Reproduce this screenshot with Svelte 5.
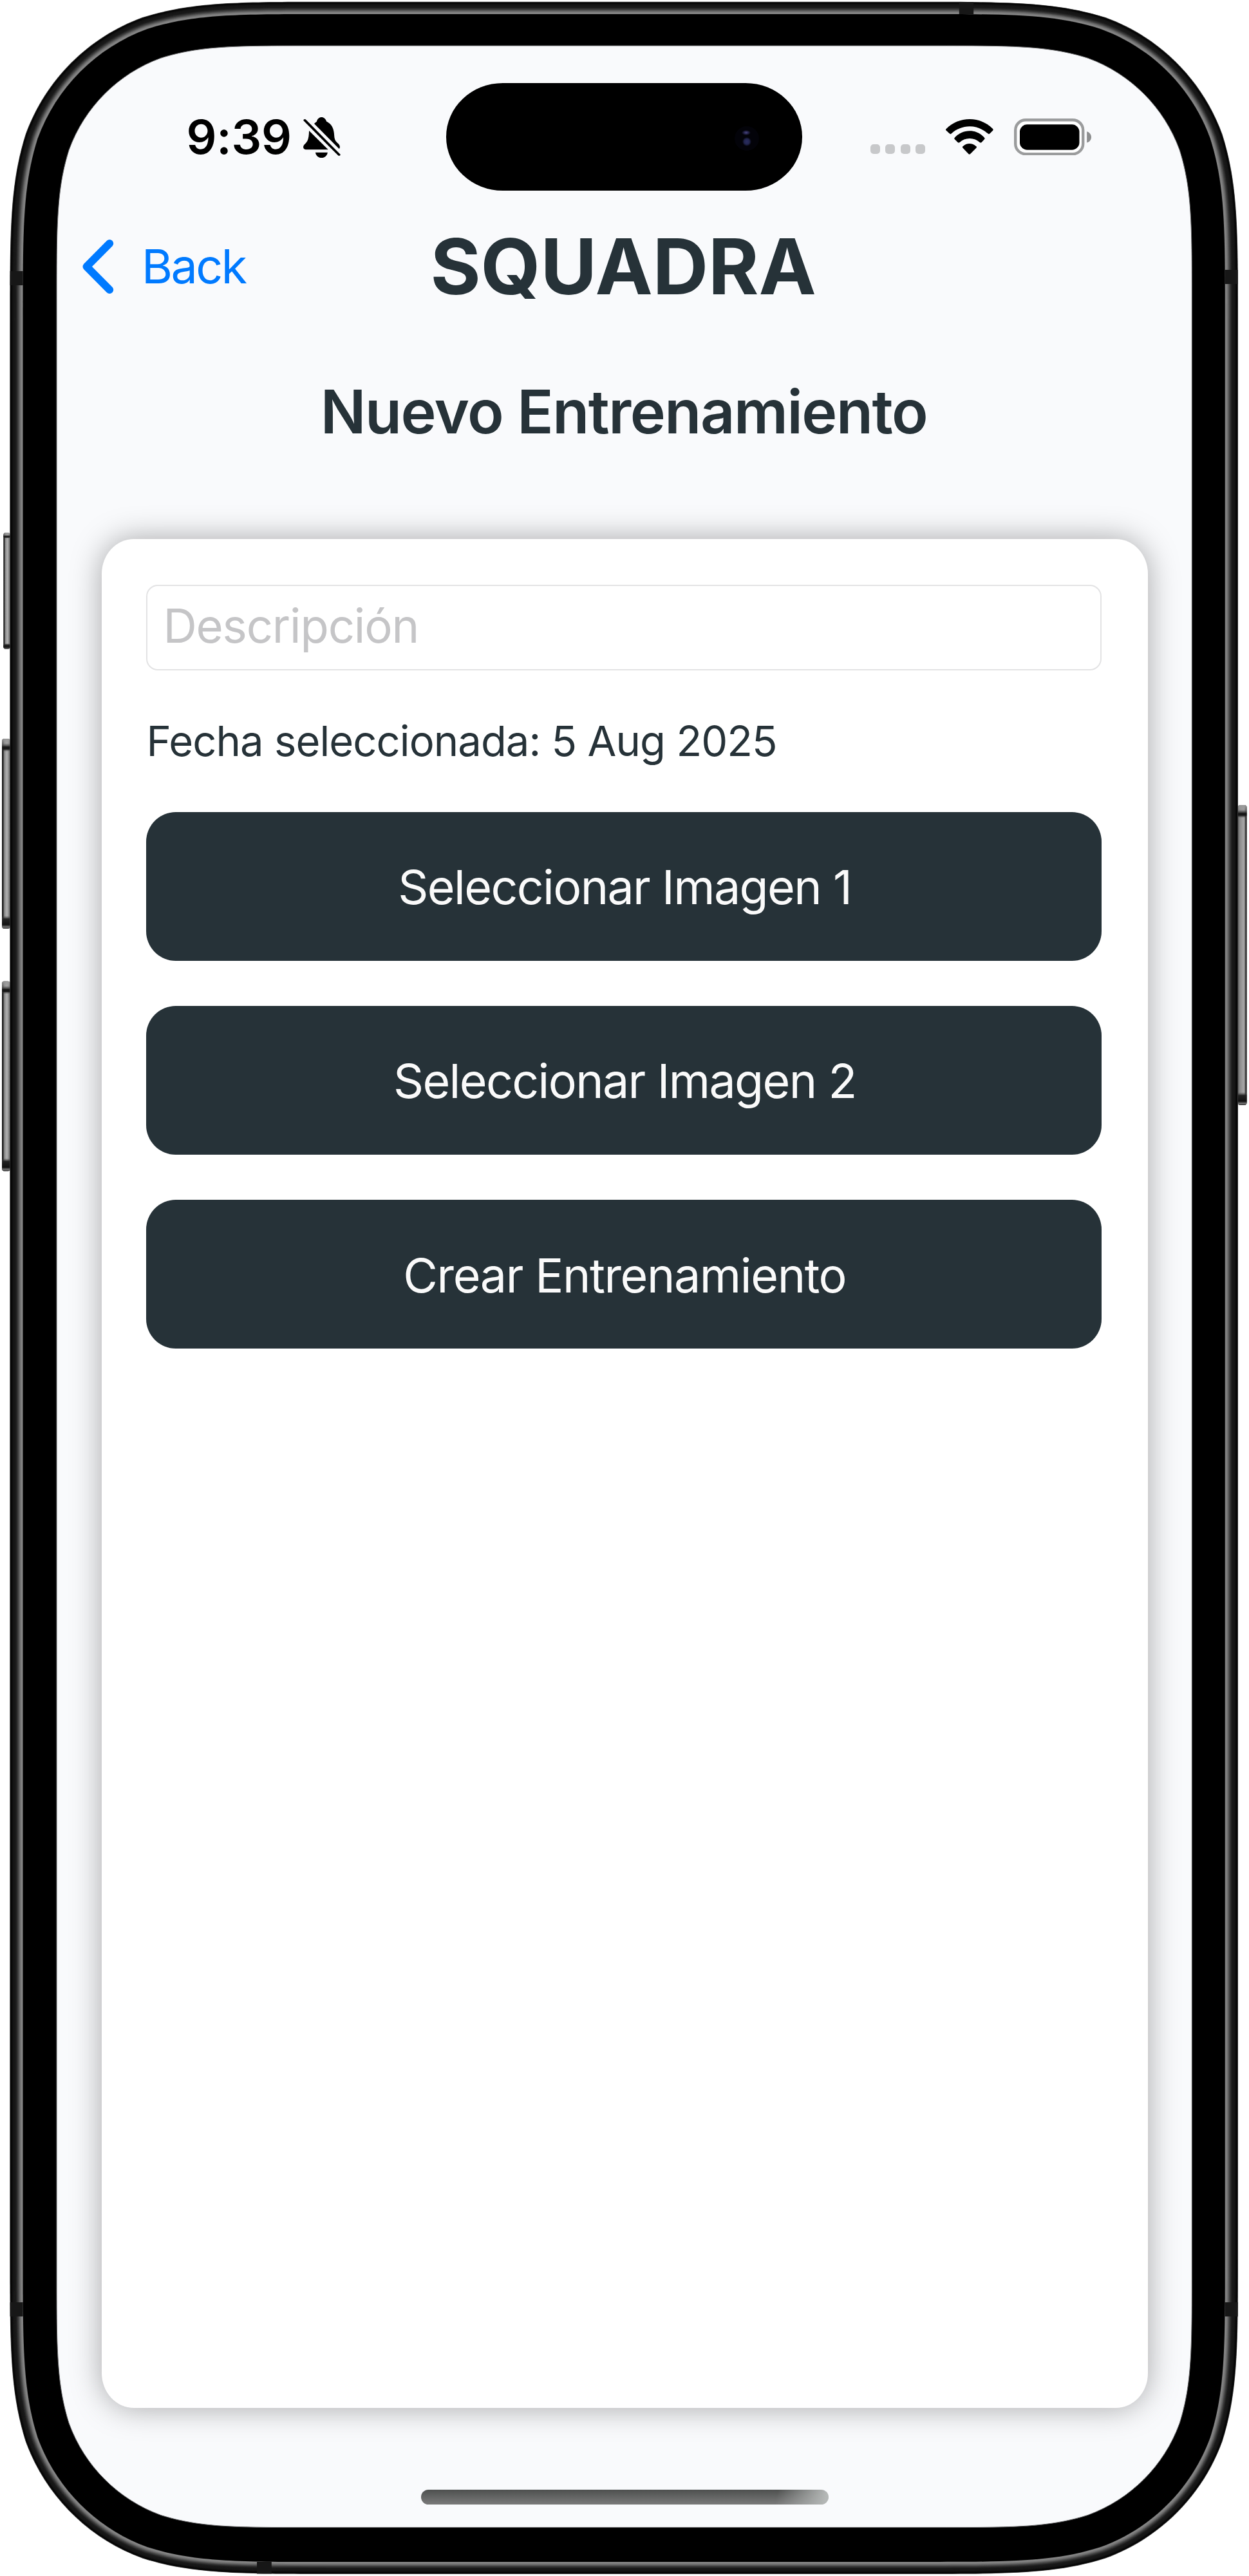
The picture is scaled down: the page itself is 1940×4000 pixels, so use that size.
<script>
  const actions = [
    { label: 'Seleccionar Imagen 1', tight: true },
    { label: 'Seleccionar Imagen 2', tight: true },
    { label: 'Crear Entrenamiento', tight: false }
  ];

  // Rounded rectangle with continuous-curvature corners.
  function squircle(x0, y0, x1, y1, r) {
    const a = 1.52866 * r, b = 1.08849 * r, c = 0.86841 * r;
    const d = 0.63149 * r, e = 0.07491 * r, f = 0.37282 * r, g = 0.16906 * r;
    return `M${x0 + a} ${y0}H${x1 - a}` +
      `C${x1 - b} ${y0} ${x1 - c} ${y0} ${x1 - d} ${y0 + e}` +
      `C${x1 - f} ${y0 + g} ${x1 - g} ${y0 + f} ${x1 - e} ${y0 + d}` +
      `C${x1} ${y0 + c} ${x1} ${y0 + b} ${x1} ${y0 + a}V${y1 - a}` +
      `C${x1} ${y1 - b} ${x1} ${y1 - c} ${x1 - e} ${y1 - d}` +
      `C${x1 - g} ${y1 - f} ${x1 - f} ${y1 - g} ${x1 - d} ${y1 - e}` +
      `C${x1 - c} ${y1} ${x1 - b} ${y1} ${x1 - a} ${y1}H${x0 + a}` +
      `C${x0 + b} ${y1} ${x0 + c} ${y1} ${x0 + d} ${y1 - e}` +
      `C${x0 + f} ${y1 - g} ${x0 + g} ${y1 - f} ${x0 + e} ${y1 - d}` +
      `C${x0} ${y1 - c} ${x0} ${y1 - b} ${x0} ${y1 - a}V${y0 + a}` +
      `C${x0} ${y0 + b} ${x0} ${y0 + c} ${x0 + e} ${y0 + d}` +
      `C${x0 + g} ${y0 + f} ${x0 + f} ${y0 + g} ${x0 + d} ${y0 + e}` +
      `C${x0 + c} ${y0} ${x0 + b} ${y0} ${x0 + a} ${y0}Z`;
  }

  // Brightness profile of the metal rim, from the outer edge to the inner one.
  const stops = [[0, 70], [0.05, 4], [0.14, 10], [0.22, 21], [0.45, 27], [0.6, 58], [0.78, 112], [0.92, 138], [1, 108]];
  function shade(t) {
    let i = 1;
    while (i < stops.length - 1 && stops[i][0] < t) i++;
    const [ta, va] = stops[i - 1];
    const [tb, vb] = stops[i];
    return Math.round(va + ((t - ta) / (tb - ta)) * (vb - va));
  }

  const steps = 40;
  const rim = Array.from({ length: steps }, (_, i) => {
    const t = i / steps;
    const v = shade(t);
    return {
      d: squircle(15.3 + 20.3 * t, 2.7 + 19.3 * t, 1923 - 20.3 * t, 3996.9 - 19 * t, 326 - 20 * t),
      fill: `rgb(${v},${v},${v})`
    };
  });
  const bezel = squircle(35.6, 22, 1902.7, 3978, 306);
  const glass = squircle(88, 71, 1851.3, 3924.6, 256);

  const sideKeys = [
    { x: 5.3, y: 827, w: 10.5, h: 181, tip: 9, side: 'left' },
    { x: 3, y: 1147, w: 13, h: 295, tip: 20, side: 'left' },
    { x: 3, y: 1523.5, w: 13, h: 295, tip: 20, side: 'left' },
    { x: 1922.6, y: 1250, w: 14, h: 466, tip: 20, side: 'right' }
  ];
  const bands = [
    { x: 15.6, y: 421, w: 20, h: 22 },
    { x: 1902.7, y: 419, w: 20, h: 22 },
    { x: 15.6, y: 3575, w: 20, h: 22 },
    { x: 1902.7, y: 3575, w: 20, h: 22 },
    { x: 1489.8, y: 3, w: 22.4, h: 19 },
    { x: 399, y: 3978, w: 22.8, h: 18.5 }
  ];
</script>

<div class="phone">
  <svg class="frame" viewBox="0 0 1940 4000" aria-hidden="true">
    <defs>
      <linearGradient id="key-left" x1="0" x2="1">
        <stop offset="0" stop-color="#111" /><stop offset="0.14" stop-color="#2a2a2a" />
        <stop offset="0.3" stop-color="#8c8c8c" /><stop offset="0.6" stop-color="#b0b0b0" />
        <stop offset="0.85" stop-color="#808080" /><stop offset="1" stop-color="#555" />
      </linearGradient>
      <linearGradient id="key-right" x1="0" x2="1">
        <stop offset="0" stop-color="#555" /><stop offset="0.2" stop-color="#888" />
        <stop offset="0.65" stop-color="#a8a8a8" /><stop offset="0.82" stop-color="#777" />
        <stop offset="0.9" stop-color="#111" /><stop offset="1" stop-color="#222" />
      </linearGradient>
      <linearGradient id="tip-top" x1="0" x2="0" y1="0" y2="1">
        <stop offset="0" stop-color="#999" /><stop offset="0.35" stop-color="#999" stop-opacity="0.6" />
        <stop offset="0.65" stop-color="#161616" /><stop offset="0.8" stop-color="#161616" />
        <stop offset="1" stop-color="#444" stop-opacity="0" />
      </linearGradient>
      <linearGradient id="tip-bottom" x1="0" x2="0" y1="0" y2="1">
        <stop offset="0" stop-color="#444" stop-opacity="0" /><stop offset="0.25" stop-color="#222" />
        <stop offset="0.7" stop-color="#111" /><stop offset="0.88" stop-color="#777" />
        <stop offset="1" stop-color="#222" />
      </linearGradient>
    </defs>
    {#each sideKeys as k}
      <rect x={k.x} y={k.y} width={k.w} height={k.h} rx="4" fill="url(#key-{k.side})" />
      <rect x={k.x} y={k.y} width={k.w} height={k.tip} rx="4" fill="url(#tip-top)" />
      <rect x={k.x} y={k.y + k.h - k.tip} width={k.w} height={k.tip} rx="4" fill="url(#tip-bottom)" />
    {/each}
    {#each rim as ring}
      <path d={ring.d} fill={ring.fill} />
    {/each}
    {#each bands as b}
      <rect x={b.x} y={b.y} width={b.w} height={b.h} fill="#171717" />
    {/each}
    <path d={bezel} fill="#000" />
    <path d={glass} fill="#f9fafc" stroke="#6a6a6c" stroke-width="1" />
  </svg>

  <div class="screen">
    <div class="status">
      <div class="status-left">
        <span class="time">9:39</span>
        <svg class="bell" viewBox="1190 545 147 190" preserveAspectRatio="none">
          <path d="M1233 575L1243 565C1246 552 1253 545 1262 545C1271 545 1278 552 1282 565C1302 577 1311 598 1312 630C1313 656 1321 660 1330 671C1335 678 1336 688 1331 692Z" />
          <path d="M1213 608L1288 696H1201C1189 695 1187 682 1195 672C1206 659 1212 652 1213 608Z" />
          <path d="M1238 709H1286C1284 724 1275 734 1262 734S1240 724 1238 709Z" />
          <path class="slash" d="M1196 559L1331 720" />
        </svg>
      </div>
      <div class="island"><span class="lens"></span></div>
      <div class="status-right">
        <div class="signal"><i></i><i></i><i></i><i></i></div>
        <svg class="wifi" viewBox="414 553 181 165" preserveAspectRatio="none">
          <path d="M416 598C440 569 471 553 505 553S569 569 593 598Q596 602 593 606L582 620Q578 625 574 620C555 599 531 587 505 587S454 599 436 620Q432 625 428 620L416 606Q412 602 416 598Z" />
          <path d="M448 639C463 619 483 608 505 608S546 619 561 639Q564 643 561 647L551 660Q547 665 543 661C533 650 520 643 505 643S477 650 467 661Q463 665 459 660L448 647Q445 643 448 639Z" />
          <path d="M479 680C486 671 495 667 504 667S523 671 530 680Q533 683 530 687L508 714Q504 719 500 714L479 687Q476 683 479 680Z" />
        </svg>
        <svg class="battery" viewBox="0 0 120 57.5">
          <rect x="2.2" y="2.2" width="105" height="53" rx="16" fill="#fff" stroke="#9b9c9d" stroke-width="4.4" />
          <rect x="9" y="9.3" width="92.5" height="39.4" rx="11.5" />
          <path d="M113.2 20.2C117.5 21.5 120 25 120 28.9S117.500 36.300 113.200 37.600Z" fill="#8d8e8f" />
        </svg>
      </div>
    </div>

    <header>
      <button class="back">
        <svg class="chevron" viewBox="0 0 50 86"><path d="M43.200 7L7.500 43L43.200 79" /></svg>
        Back
      </button>
      <h1>SQUADRA</h1>
    </header>

    <h2>Nuevo Entrenamiento</h2>

    <main>
      <input type="text" placeholder="Descripción" />
      <p>Fecha seleccionada: 5 Aug 2025</p>
      <div class="actions">
        {#each actions as action}
          <button class="action" class:tight={action.tight}>{action.label}</button>
        {/each}
      </div>
    </main>

    <div class="home"></div>
  </div>
</div>

<style>
  :global(body) { background: #fff; }
  .phone {
    position: relative;
    width: 1940px;
    height: 4000px;
    overflow: hidden;
    font-family: Inter, Roboto, sans-serif;
    color: #263238;
  }
  .frame { position: absolute; inset: 0; width: 1940px; height: 4000px; }
  .screen {
    position: relative;
    display: flex;
    flex-direction: column;
    box-sizing: border-box;
    height: 4000px;
    padding-top: 129.300px;
  }

  .status { display: flex; height: 166.500px; color: #000; }
  .status-left {
    display: flex;
    align-items: center;
    box-sizing: border-box;
    width: 692.500px;
    padding-left: 289.600px;
  }
  .time { width: 181px; font-size: 73.500px; font-weight: 600; letter-spacing: -0.300px; line-height: 1; }
  .bell { width: 58px; height: 63.300px; margin-top: 2px; }
  .slash { stroke: #000; stroke-width: 10; stroke-linecap: round; }
  .island {
    display: flex;
    align-items: center;
    justify-content: flex-end;
    box-sizing: border-box;
    width: 553.500px;
    padding-right: 67px;
    border-radius: 88px / 83.250px;
    background: #000;
  }
  .lens {
    width: 38px;
    height: 38px;
    margin-top: 4px;
    border-radius: 50%;
    background:
      radial-gradient(ellipse 7px 4px at 18px 10px, #4e4c86 0%, #2a2852 45%, transparent 100%),
      radial-gradient(circle 7px at 19px 24px, #2b2e62 0%, #22254e 60%, transparent 100%),
      #030309;
  }
  .status-right { display: flex; align-items: center; padding-left: 105.800px; }
  .signal { display: flex; gap: 8.700px; width: 117.200px; margin-top: 38px; }
  .signal i { width: 14.800px; height: 15px; border-radius: 5px; background: #c7c8ca; }
  .wifi { width: 73.900px; height: 55px; margin-right: 32.600px; }
  .battery { width: 120px; height: 57.500px; }

  header {
    display: grid;
    grid-template-columns: 1fr auto 1fr;
    align-items: center;
    width: 1936px;
    height: 120px;
    margin-top: 58.200px;
  }
  .back {
    display: flex;
    align-items: center;
    gap: 43px;
    padding: 0 0 0 127px;
    border: 0;
    background: none;
    color: #007aff;
    font: 400 73.500px / 1 Inter, Roboto, sans-serif;
    letter-spacing: -2.500px;
  }
  .chevron { width: 50px; height: 86px; fill: none; stroke: #007aff; stroke-width: 12; stroke-linecap: round; stroke-linejoin: round; }
  h1 { margin: 0; font-size: 119.600px; font-weight: 700; line-height: 1; letter-spacing: -0.100px; }
  h2 {
    width: 1938px;
    margin: 105.500px 0 0;
    font-size: 93.200px;
    font-weight: 600;
    line-height: 120px;
    letter-spacing: -1.460px;
    text-align: center;
  }

  main {
    box-sizing: border-box;
    width: 1625px;
    height: 2901.700px;
    margin: 137.500px 0 0 157.700px;
    padding: 71px 71.500px 0 69.700px;
    border-radius: 50px / 54px;
    background: #fff;
    box-shadow: 0 0 48px rgba(0, 0, 0, 0.34);
  }
  input {
    display: block;
    box-sizing: border-box;
    width: 100%;
    height: 133px;
    padding: 0 24px 6px;
    border: 2px solid #e3e3e4;
    border-radius: 18px;
    background: #fff;
    font: 400 72.500px Inter, Roboto, sans-serif;
    letter-spacing: -1.200px;
  }
  input::placeholder { color: #c5c5c7; opacity: 1; }
  p { margin: 0; font-size: 65.100px; line-height: 219.800px; letter-spacing: -0.940px; }
  .actions { display: flex; flex-direction: column; gap: 70.300px; }
  .action {
    height: 231px;
    padding: 3px 0 0 2px;
    border: 0;
    border-radius: 46px;
    background: #263238;
    color: #fafafa;
    font: 400 73.500px / 1 Inter, Roboto, sans-serif;
    letter-spacing: -1.420px;
  }
  .action.tight { letter-spacing: -1.650px; }

  .home {
    width: 633.500px;
    height: 22.500px;
    margin: 127.700px 0 0 653.600px;
    border-radius: 12px;
    background:
      linear-gradient(100deg, transparent 87%, #b4b7b6 99%),
      linear-gradient(#4e504f, #7a7a7a);
  }
</style>
